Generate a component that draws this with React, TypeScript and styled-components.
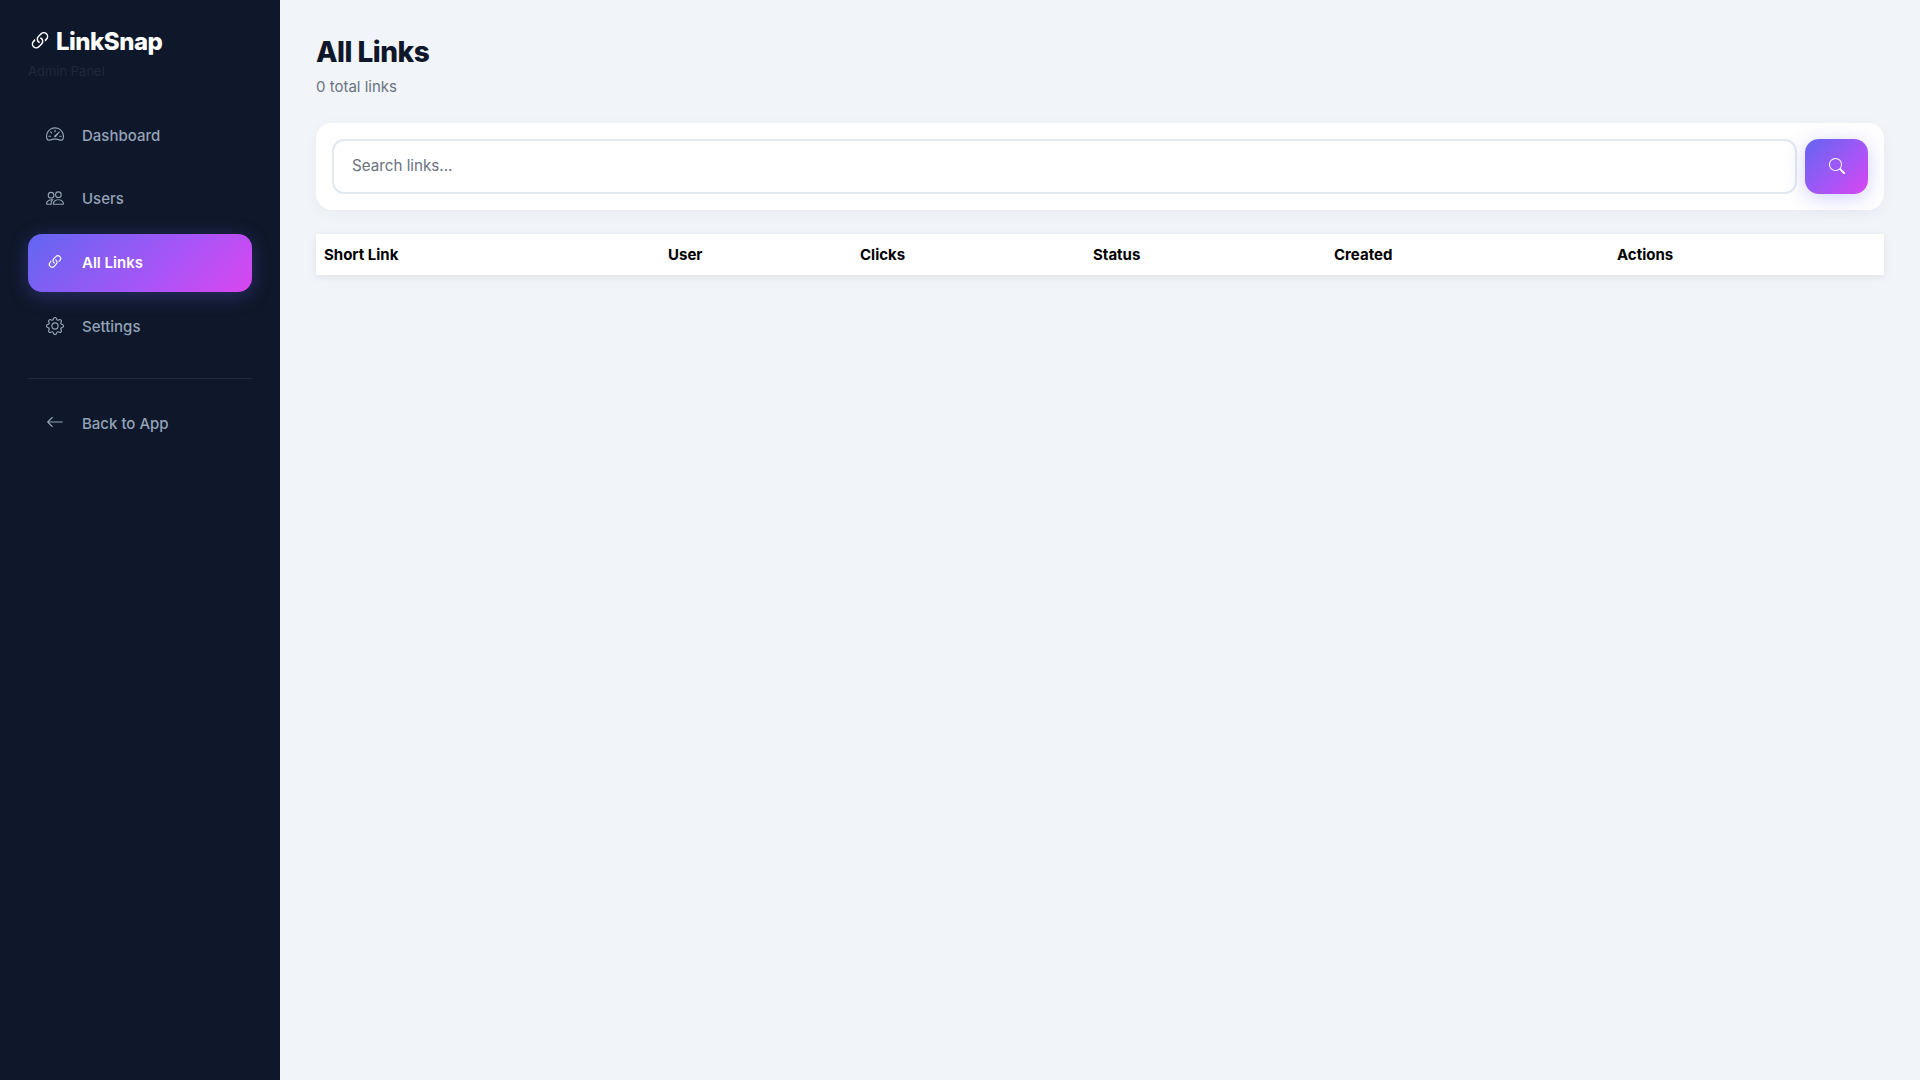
import React from "react";
import styled, { createGlobalStyle } from "styled-components";
import { BsArrowLeft, BsGear, BsLink45Deg, BsPeople, BsSearch, BsSpeedometer2 } from "react-icons/bs";

const brandGradient = "linear-gradient(135deg, #6366f1 0%, #a855f7 60%, #d946ef 100%)";

const Global = createGlobalStyle`
  * { box-sizing: border-box; }
  html, body { margin: 0; padding: 0; }
  body { font-family: Inter, "Liberation Sans", sans-serif; background: #f1f5f9; }
  input::placeholder { color: #6b7280; opacity: 1; }
`;

const Shell = styled.div`
  display: flex;
  min-height: 1080px;
`;

const Sidebar = styled.aside`
  width: 280px;
  flex: none;
  background: #0f172a;
  padding: 24px 28px;
`;

const Logo = styled.div`
  display: flex;
  align-items: center;
  gap: 4px;
  height: 34px;
  color: #fff;
  font-size: 24px;
  font-weight: 800;
  letter-spacing: -0.5px;
  svg { width: 24px; height: 24px; }
`;

const Tagline = styled.div`
  font-size: 13px;
  line-height: 16px;
  height: 16px;
  margin-top: 5px;
  color: #1e293b;
  margin-bottom: 27.3px;
`;

const NavList = styled.nav`
  display: flex;
  flex-direction: column;
  gap: 6px;
`;

const NavItem = styled.a<{ $active?: boolean }>`
  display: flex;
  align-items: center;
  height: 57.8px;
  padding: 0 18px;
  gap: 18px;
  border-radius: 14px;
  font-size: 15px;
  font-weight: ${(p) => (p.$active ? 600 : 500)};
  color: ${(p) => (p.$active ? "#fff" : "#94a3b8")};
  background: ${(p) => (p.$active ? brandGradient : "transparent")};
  box-shadow: ${(p) => (p.$active ? "0 4px 20px rgba(99, 102, 241, 0.3)" : "none")};
`;

const NavIcon = styled.span`
  display: flex;
  width: 18px;
  height: 18px;
  align-items: center;
  justify-content: center;
  position: relative;
  top: -1px;
  svg { width: 18px; height: 18px; }
`;

const Divider = styled.hr`
  border: 0;
  border-top: 1px solid #1e293b;
  margin: 22.9px 0 15px;
`;

const Main = styled.main`
  flex: 1;
  min-width: 0;
  padding: 32px 36px;
`;

const Title = styled.h1`
  margin: 0;
  font-size: 28px;
  line-height: 40px;
  font-weight: 800;
  letter-spacing: -0.5px;
  color: #0f172a;
`;

const Subtitle = styled.p`
  margin: 5px 0 0;
  font-size: 15px;
  line-height: 20px;
  color: #6b7280;
`;

const SearchCard = styled.form`
  display: flex;
  gap: 8px;
  margin-top: 26px;
  padding: 16px;
  background: #fff;
  border-radius: 16px;
  box-shadow: 0 4px 16px rgba(15, 23, 42, 0.04);
`;

const SearchInput = styled.input`
  flex: 1;
  min-width: 0;
  height: 55px;
  padding: 0 18px 2px;
  border: 2px solid #e2e8f0;
  border-radius: 12px;
  background: #fff;
  font: 400 15.2px Inter, sans-serif;
  outline: none;
`;

const SearchButton = styled.button`
  display: flex;
  align-items: center;
  justify-content: center;
  width: 63px;
  height: 55px;
  padding: 0 0 1px;
  border: 0;
  border-radius: 14px;
  color: #fff;
  background: ${brandGradient};
  box-shadow: 0 4px 20px rgba(99, 102, 241, 0.3);
  svg { width: 16px; height: 16px; }
`;

const Table = styled.table`
  width: 100%;
  margin-top: 24px;
  border-collapse: collapse;
  background: #fff;
  box-shadow: 0 2px 8px rgba(15, 23, 42, 0.08);
`;

const HeadCell = styled.th<{ $width: number }>`
  width: ${(p) => p.$width}px;
  height: 41px;
  padding: 0 8px;
  text-align: left;
  font-size: 15px;
  font-weight: 700;
  color: #000;
`;

const nav = [
  { label: "Dashboard", icon: <BsSpeedometer2 /> },
  { label: "Users", icon: <BsPeople /> },
  { label: "All Links", icon: <BsLink45Deg />, active: true },
  { label: "Settings", icon: <BsGear /> },
];

const columns = [
  { label: "Short Link", width: 344 },
  { label: "User", width: 192 },
  { label: "Clicks", width: 233 },
  { label: "Status", width: 241 },
  { label: "Created", width: 283 },
  { label: "Actions", width: 275 },
];

export default function App() {
  return (
    <Shell>
      <Global />
      <Sidebar>
        <Logo>
          <BsLink45Deg />
          LinkSnap
        </Logo>
        <Tagline>Admin Panel</Tagline>
        <NavList>
          {nav.map((n) => (
            <NavItem key={n.label} $active={n.active}>
              <NavIcon>{n.icon}</NavIcon>
              {n.label}
            </NavItem>
          ))}
        </NavList>
        <Divider />
        <NavItem>
          <NavIcon>
            <BsArrowLeft />
          </NavIcon>
          Back to App
        </NavItem>
      </Sidebar>
      <Main>
        <Title>All Links</Title>
        <Subtitle>0 total links</Subtitle>
        <SearchCard>
          <SearchInput placeholder="Search links..." />
          <SearchButton type="button" aria-label="Search">
            <BsSearch />
          </SearchButton>
        </SearchCard>
        <Table>
          <thead>
            <tr>
              {columns.map((c) => (
                <HeadCell key={c.label} $width={c.width}>
                  {c.label}
                </HeadCell>
              ))}
            </tr>
          </thead>
        </Table>
      </Main>
    </Shell>
  );
}
